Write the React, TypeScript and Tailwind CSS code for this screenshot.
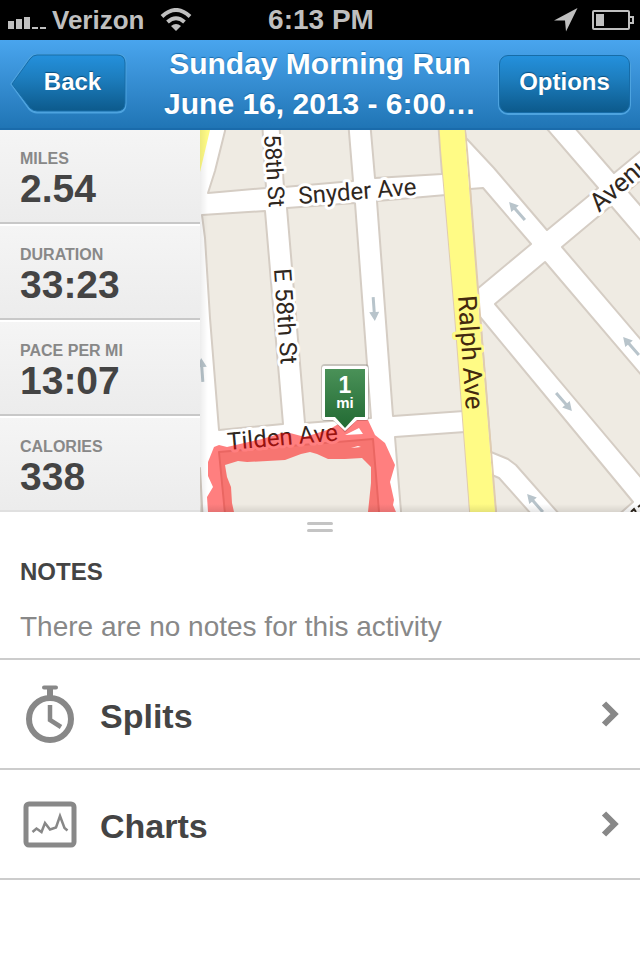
import React from "react";

const sans = "font-['Liberation_Sans',Arial,sans-serif]";

const stats = [
  { label: "MILES", value: "2.54" },
  { label: "DURATION", value: "33:23" },
  { label: "PACE PER MI", value: "13:07" },
  { label: "CALORIES", value: "338" },
];

const blocks = [
  "226,120 225,131 215,171 208,193 266,188 262,120",
  "279,120 284,187 353,181 348,120",
  "370,120 375,178 442,174 438,120",
  "202,215 265,211 283,424 219,430 210,318 205,238",
  "287,208 355,203 371,418 305,423",
  "377,201 446,195 464,411 393,416",
  "395,437 465,432 471,524 402,524",
  "219,452 373,439 380,524 226,524",
  "190,468 200,468 203,524 190,524",
  "463,120 466,138 494,168 547,230 598,188 541,122",
  "470,189 483,188 531,244 477,289",
  "568,120 614,173 660,135 660,120",
  "628,191 660,228 660,164",
  "562,247 611,206 660,263 660,362",
  "545,262 495,304 660,500 660,397",
  "480,317 633,502 608,524 568,524 516,465 508,459 491,452",
  "492,475 499,478 540,524 497,524",
];

const arrows = [
  { x: 374, y: 309, r: 86 },
  { x: 517, y: 211, r: 229 },
  { x: 564, y: 402, r: 49 },
  { x: 631, y: 346, r: 229 },
  { x: 535, y: 503, r: 229 },
  { x: 202, y: 370, r: 266 },
];

function StatusBar() {
  return (
    <header className="grid h-10 grid-cols-[1fr_auto_1fr] items-center bg-black pr-[6px] pl-2 font-bold text-[#bfbfbf]">
      <div className="flex items-center">
        <svg width="40" height="14" viewBox="0 0 40 14" fill="currentColor" className="mt-1" aria-label="Signal">
          <path d="M0 6h6v8H0zM8 4h6v10H8zM16 2h6v12h-6zM24 12h6v2h-6zM32 12h6v2h-6z" />
        </svg>
        <span className="ml-1 text-[26px] leading-10">Verizon</span>
        <svg width="32" height="24" viewBox="0 0 32 24" className="ml-4" fill="none" stroke="currentColor" strokeWidth="4" aria-label="Wi-Fi">
          <path d="M2 8.500Q16 -4.500 30 8.500" />
          <path d="M7.500 14Q16 6.500 24.500 14" />
          <path d="M16 23l-5-5q5-4 10 0z" fill="currentColor" stroke="none" />
        </svg>
      </div>
      <time className="text-[28px] leading-10">6:13 PM</time>
      <div className="flex items-center justify-end gap-[14px]">
        <svg width="24" height="24" viewBox="0 0 24 24" fill="currentColor" aria-label="Location">
          <path d="M23.500 0L12 23.500L11 12.500L0 12.500z" />
        </svg>
        <svg width="42" height="20" viewBox="0 0 42 20" fill="none" stroke="currentColor" strokeWidth="2" aria-label="Battery">
          <rect x="1" y="1" width="36" height="18" rx="1" />
          <path d="M38 7h3v6h-3" />
          <path d="M4 4h8v12H4z" fill="currentColor" stroke="none" />
        </svg>
      </div>
    </header>
  );
}

function NavBar() {
  return (
    <nav className="grid h-[90px] grid-cols-[1fr_auto_1fr] items-center border-b-2 border-[#1a6bab] bg-linear-to-b from-[#49a5ee] to-[#2075b5] px-[10px] font-bold text-white">
      <button type="button" className="relative h-[60px] w-[117px] justify-self-start pb-1 pl-2 text-[24px] [text-shadow:0_-1px_1px_#0b4f7f]">
        <svg className="absolute inset-0" width="117" height="60" viewBox="0 0 117 60" aria-hidden="true">
          <defs>
            <linearGradient id="back" x1="0" y1="0" x2="0" y2="1">
              <stop offset="0" stopColor="#2490dc" />
              <stop offset=".4" stopColor="#1d7ebf" />
              <stop offset="1" stopColor="#0c5a8c" />
            </linearGradient>
          </defs>
          <path d="M2 30L20 5Q23 1 27 1H107Q115 1 115 9V50Q115 58 107 58H27Q23 58 20 55z" fill="none" stroke="#4da3df" strokeWidth="3" />
          <path d="M2 30L20 5Q23 1 27 1H107Q115 1 115 9V49Q115 57 107 57H27Q23 57 20 54z" fill="url(#back)" stroke="#166ca8" />
        </svg>
        <span className="relative">Back</span>
      </button>
      <h1 className="text-center text-[30px] leading-10 [text-shadow:0_-1px_1px_#1d6dab]">
        Sunday Morning Run
        <br />
        June 16, 2013 - 6:00…
      </h1>
      <button type="button" className="h-[58px] w-[131px] justify-self-end rounded-[9px] border border-[#166ca8] bg-linear-to-b from-[#2490dc] via-[#1d7ebf] via-40% to-[#0c5a8c] pb-1 text-[24px] shadow-[0_1px_0_1px_#4da3df] [text-shadow:0_-1px_1px_#0b4f7f]">
        Options
      </button>
    </nav>
  );
}

function RouteMap() {
  return (
    <div className="min-w-0 flex-1">
      <svg
        className="block h-[382px] w-full bg-white"
        viewBox="200 130 440 382"
        preserveAspectRatio="xMinYMin slice"
        role="img"
        aria-label="Route map"
      >
        <defs>
          <linearGradient id="pin" x1="0" y1="0" x2="0" y2="1">
            <stop offset="0" stopColor="#4a9158" />
            <stop offset="1" stopColor="#226a33" />
          </linearGradient>
          <linearGradient id="left">
            <stop offset="0" stopColor="#000" stopOpacity=".07" />
            <stop offset="1" stopColor="#000" stopOpacity="0" />
          </linearGradient>
          <linearGradient id="bottom" x1="0" y1="0" x2="0" y2="1">
            <stop offset="0" stopColor="#000" stopOpacity="0" />
            <stop offset="1" stopColor="#000" stopOpacity=".1" />
          </linearGradient>
        </defs>
        <g fill="#efebe3" stroke="#d5cdc4" strokeWidth="2" strokeLinejoin="round">
          {blocks.map((points) => (
            <polygon key={points} points={points} />
          ))}
        </g>
        <path d="M200 130H210L200 172z" fill="#fffb85" />
        <path d="M439 120L441 150L455 315L471 524M464 120L467 150L480 315L497 524" fill="none" stroke="#e0ccb0" strokeWidth="2" />
        <path d="M439 120L441 150L455 315L471 524H496L479 315L466 150L464 120z" fill="#fffb85" />
        <g fill="#b8c4cb">
          {arrows.map((a) => (
            <path key={a.x} d="M-12-1.500H3V-5L12 0L3 5V1.500H-12z" transform={`translate(${a.x} ${a.y}) rotate(${a.r})`} />
          ))}
        </g>
        <g
          fontFamily="Roboto, sans-serif"
          fontSize="24"
          textRendering="geometricPrecision"
          fill="#2f271e"
          stroke="#fff"
          strokeWidth="6"
          strokeLinejoin="round"
          paintOrder="stroke"
        >
          <text transform="translate(299 204) rotate(-4.500)">Snyder Ave</text>
          <text transform="translate(264 135) rotate(86)" fontSize="23">58th St</text>
          <text transform="translate(274 269) rotate(86)">E 58th St</text>
          <text transform="translate(228 450) rotate(-5)">Tilden Ave</text>
          <text transform="translate(599 213) rotate(-41)" fontSize="26">Avenu</text>
          <text transform="translate(458 296) rotate(86)" fontSize="26" fill="#43290f" stroke="#fffb85">Ralph Ave</text>
        </g>
        <path d="M631 512l3-3 2 3M638 507l4-3v6" fill="none" stroke="#2f271e" strokeWidth="2" />
        <path
          fillRule="evenodd"
          fill="#ff0000"
          fillOpacity=".5"
          d="M208 520V512L207 497L213 487L208 476V462L214 447L219 445L227 447L262 439L282 433L290 433L305 437L330 429L345 420L368 420L375 435L385 443L395 465L390 482L394 500L393 505L396 512V520H368V512L371 483V467L362 458L345 459L328 459L317 454L310 452L301 454L285 460L247 462L238 461L225 465L227 477L231 487L232 503L234 512V520z"
        />
        <path d="M345 435L359 428L363 434zM351 448L358 446L361 447z" fill="#fff" />
        <path d="M325 365H365Q368 365 368 368V417Q368 420 365 420H356L345 431L334 420H325Q322 420 322 417V368Q322 365 325 365z" fill="#000" opacity=".16" stroke="#000" strokeWidth="2" />
        <path d="M324 366H366Q368 366 368 368V418Q368 420 366 420H357L345 431L333 420H324Q322 420 322 418V368Q322 366 324 366z" fill="#fff" />
        <path d="M325 369H365V417H355L345 428L335 417H325z" fill="url(#pin)" />
        <g fill="#fff" fontWeight="700" textAnchor="middle">
          <text x="345" y="393" fontSize="23">1</text>
          <text x="345" y="408" fontSize="15">mi</text>
        </g>
        <rect x="200" y="130" width="8" height="382" fill="url(#left)" />
        <rect x="200" y="504" width="440" height="8" fill="url(#bottom)" />
      </svg>
    </div>
  );
}

function StopwatchIcon() {
  return (
    <svg width="60" height="60" viewBox="0 0 60 60" fill="none" stroke="#888" aria-hidden="true">
      <circle cx="30" cy="35" r="21" strokeWidth="6" />
      <path d="M24 3.500h12" strokeWidth="4" strokeLinecap="round" />
      <path d="M30 4v9" strokeWidth="6" />
      <path d="M30 21v15l11 7" strokeWidth="4.500" />
    </svg>
  );
}

function ChartIcon() {
  return (
    <svg width="60" height="60" viewBox="0 0 60 60" fill="none" stroke="#888" aria-hidden="true">
      <rect x="6" y="10" width="48" height="41" rx="3" strokeWidth="5" />
      <path d="M12.500 38l4-3.500 5 3.500 3.500-9 5 6.500 6-2 4-11.500 4.500 12 3 2.500" strokeWidth="2.500" />
    </svg>
  );
}

function MenuRow({ icon, label }: { icon: React.ReactNode; label: string }) {
  return (
    <button type="button" className="flex h-[110px] w-full items-center gap-5 border-b-2 border-[#ccc] px-5 text-left">
      {icon}
      <span className="flex-1 pt-1 text-[34px] leading-10 font-bold text-[#444]">{label}</span>
      <svg width="20" height="28" viewBox="0 0 20 28" fill="none" stroke="#888" strokeWidth="6" aria-hidden="true">
        <path d="M4 3.500L14.500 14L4 24.500" />
      </svg>
    </button>
  );
}

export default function App() {
  return (
    <div className={`min-h-screen bg-white ${sans}`}>
      <StatusBar />
      <NavBar />
      <main>
        <section className="flex">
          <dl className="w-[200px] shrink-0">
            {stats.map((s) => (
              <div
                key={s.label}
                className="border-t-2 border-b-2 border-t-white border-b-[#c8c8c8] bg-linear-to-b from-[#f5f5f5] to-[#ececec] px-5 pt-[19px] pb-[13px] first:border-t-0 last:border-b-[#e0e0e0]"
              >
                <dt className="text-[16px] leading-5 font-bold text-[#888]">{s.label}</dt>
                <dd className="text-[39px] leading-10 font-bold text-[#444]">{s.value}</dd>
              </div>
            ))}
          </dl>
          <RouteMap />
        </section>
        <button type="button" aria-label="Resize map" className="flex h-[30px] w-full flex-col items-center justify-center gap-1">
          <span className="h-[3px] w-[26px] rounded-full bg-[#c4c4c4]" />
          <span className="h-[3px] w-[26px] rounded-full bg-[#c4c4c4]" />
        </button>
        <section className="border-b-2 border-[#ccc] px-5 pt-[14px] pb-[11px]">
          <h2 className="text-[24px] leading-8 font-bold text-[#444]">NOTES</h2>
          <p className="pt-[19px] text-[28px] leading-10 text-[#888]">There are no notes for this activity</p>
        </section>
        <MenuRow icon={<StopwatchIcon />} label="Splits" />
        <MenuRow icon={<ChartIcon />} label="Charts" />
      </main>
    </div>
  );
}
